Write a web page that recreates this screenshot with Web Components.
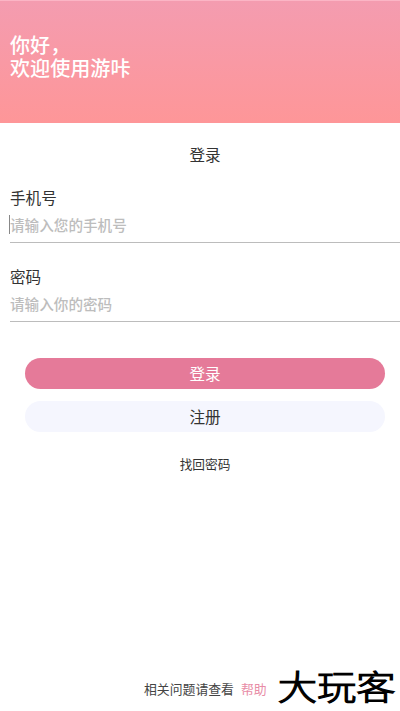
<!DOCTYPE html>
<html lang="zh-CN">
<head>
<meta charset="utf-8">
<title>登录</title>
<style>
html,body{margin:0;height:100%;background:#fff}
body{font-family:"Noto Sans CJK SC","Noto Sans",sans-serif;color:#333;overflow:hidden}
</style>
</head>
<body>
<login-page></login-page>
<script>
const define = (name, html) => customElements.define(name, class extends HTMLElement {
  constructor() {
    super();
    const t = document.createElement('template');
    t.innerHTML = html;
    this.attachShadow({mode: 'open'}).append(t.content.cloneNode(true));
  }
});

define('welcome-banner', `<style>
:host{display:block;box-sizing:border-box;height:123px;padding:32px 0 0 10px;
 background:linear-gradient(#f49cb0 0,#fe9698 100%);border-top:1px solid #fbb5c5;
 color:#fff;font-size:20.1px;line-height:23px;font-weight:500}
</style><slot></slot>`);

define('form-field', `<style>
:host{display:block;margin-left:10px;height:55px;border-bottom:1px solid #bcbcbc}
.label{font-size:15.6px;line-height:20px;height:20px;color:#333}
.input{position:relative;margin-top:8px;height:20px;font-size:14.6px;line-height:20px;font-weight:500;color:#bdbdbd}
:host([focused]) .input::before{content:"";position:absolute;left:-1px;top:0;width:1px;height:19px;background:#888}
</style><div class="label"><slot name="label"></slot></div><div class="input"><slot></slot></div>`);

define('pill-button', `<style>
:host{display:block;height:31px;border-radius:16px;line-height:31px;text-align:center;font-size:15.6px;background:#f5f6fe;color:#333}
:host([primary]){background:#e57a99;color:#fff}
</style><slot></slot>`);

define('help-footer', `<style>
:host{display:flex;height:28px;font-size:12.85px;line-height:20px;color:#444}
b{font-weight:400;color:#e88ca6;margin-left:7px}
</style><span><slot></slot></span><b><slot name="link"></slot></b>`);

define('site-mark', `<style>
:host{display:block;font-size:39.3px;line-height:40px;font-weight:300;color:#000;white-space:nowrap;
 -webkit-text-stroke:1.4px #000;stroke-linejoin:round;transform:scaleY(.86)}
</style><slot></slot>`);

define('login-page', `<style>
:host{display:flex;flex-direction:column;height:711px;width:400px}
.title{margin:21px 0 0 10px;text-align:center;font-size:15.6px;line-height:20px;height:20px}
.phone{margin-top:23px}
.pass{margin-top:23px}
.actions{margin:36px 15px 0 25px;display:grid;gap:12px}
.find{margin:22px 0 0 10px;text-align:center;font-size:12.7px;line-height:20px}
.bottom{margin-top:auto;height:46px;display:flex;align-items:flex-start;padding-left:144px}
help-footer{padding-top:14px}
site-mark{margin-left:11px}
</style>
<welcome-banner>你好，<br>欢迎使用游咔</welcome-banner>
<div class="title">登录</div>
<form-field class="phone" focused><span slot="label">手机号</span>请输入您的手机号</form-field>
<form-field class="pass"><span slot="label">密码</span>请输入你的密码</form-field>
<div class="actions"><pill-button primary>登录</pill-button><pill-button>注册</pill-button></div>
<div class="find">找回密码</div>
<div class="bottom"><help-footer>相关问题请查看<span slot="link">帮助</span></help-footer><site-mark>大玩客</site-mark></div>`);
</script>
</body>
</html>
